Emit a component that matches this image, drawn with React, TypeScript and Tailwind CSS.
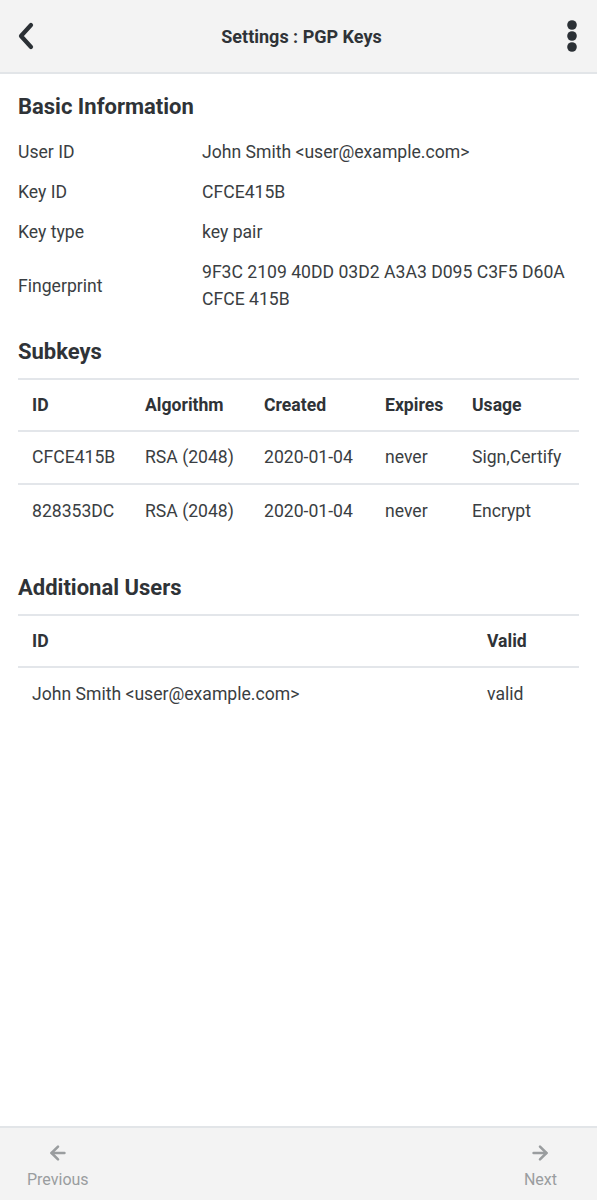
import { ArrowLeft, ArrowRight } from "lucide-react";

const basicInfo = [
  { label: "User ID", value: "John Smith <user@example.com>" },
  { label: "Key ID", value: "CFCE415B" },
  { label: "Key type", value: "key pair" },
  {
    label: "Fingerprint",
    value: "9F3C 2109 40DD 03D2 A3A3 D095 C3F5 D60A CFCE 415B",
  },
];

const subkeys = [
  { id: "CFCE415B", algo: "RSA (2048)", created: "2020-01-04", expires: "never", usage: "Sign,Certify" },
  { id: "828353DC", algo: "RSA (2048)", created: "2020-01-04", expires: "never", usage: "Encrypt" },
];

function BackIcon() {
  return (
    <svg width="20" height="30" viewBox="0 0 20 30" fill="none">
      <polyline
        points="15,4 5,15 15,26"
        stroke="#2b3035"
        strokeWidth="4.2"
        strokeLinecap="round"
        strokeLinejoin="round"
      />
    </svg>
  );
}

function MoreIcon() {
  return (
    <svg width="10" height="32" viewBox="0 0 10 32" fill="#2b3035">
      <circle cx="5" cy="5" r="4.8" />
      <circle cx="5" cy="16" r="4.8" />
      <circle cx="5" cy="27" r="4.8" />
    </svg>
  );
}

export default function App() {
  return (
    <div
      className="h-screen flex flex-col bg-white text-[#3a3e42]"
      style={{ fontFamily: "Roboto, 'Liberation Sans', sans-serif" }}
    >
      <header className="h-[74px] shrink-0 bg-[#f3f3f3] border-b-2 border-[#e2e5e8] flex items-center justify-between pl-[16px] pr-[20px]">
        <button className="flex items-center justify-center">
          <BackIcon />
        </button>
        <h1 className="text-[18px] font-bold text-[#2f3337]">Settings : PGP Keys</h1>
        <button className="flex items-center justify-center">
          <MoreIcon />
        </button>
      </header>

      <main className="flex-1 px-[18px] pt-[19px] text-[17.6px]">
        <h2 className="text-[22px] leading-[28px] font-bold text-[#2f3337]">Basic Information</h2>
        <div className="mt-[11px]">
          {basicInfo.map((row) => (
            <div key={row.label} className="flex items-center py-[8px] leading-[24px]">
              <div className="w-[184px] shrink-0">{row.label}</div>
              <div className="flex-1 leading-[27px] -my-[1.5px]">{row.value}</div>
            </div>
          ))}
        </div>

        <h2 className="mt-[19px] text-[22px] leading-[28px] font-bold text-[#2f3337]">Subkeys</h2>
        <table className="mt-[12px] w-full border-collapse text-left">
          <thead>
            <tr className="border-t-2 border-b-2 border-[#e3e6ea] h-[52px]">
              <th className="pl-[14px] w-[127px] font-bold text-[#2f3337]">ID</th>
              <th className="w-[119px] font-bold text-[#2f3337]">Algorithm</th>
              <th className="w-[121px] font-bold text-[#2f3337]">Created</th>
              <th className="w-[87px] font-bold text-[#2f3337]">Expires</th>
              <th className="font-bold text-[#2f3337]">Usage</th>
            </tr>
          </thead>
          <tbody>
            {subkeys.map((k, i) => (
              <tr
                key={k.id}
                className={`h-[53px] ${i < subkeys.length - 1 ? "border-b-2 border-[#e3e6ea]" : ""}`}
              >
                <td className="pl-[14px]">{k.id}</td>
                <td>{k.algo}</td>
                <td>{k.created}</td>
                <td>{k.expires}</td>
                <td className="whitespace-nowrap">{k.usage}</td>
              </tr>
            ))}
          </tbody>
        </table>

        <h2 className="mt-[37px] text-[22px] leading-[28px] font-bold text-[#2f3337]">Additional Users</h2>
        <table className="mt-[12px] w-full border-collapse text-left">
          <thead>
            <tr className="border-t-2 border-b-2 border-[#e3e6ea] h-[52px]">
              <th className="pl-[14px] font-bold text-[#2f3337]">ID</th>
              <th className="w-[92px] font-bold text-[#2f3337]">Valid</th>
            </tr>
          </thead>
          <tbody>
            <tr className="h-[53px]">
              <td className="pl-[14px]">John Smith &lt;user@example.com&gt;</td>
              <td>valid</td>
            </tr>
          </tbody>
        </table>
      </main>

      <footer className="h-[74px] shrink-0 bg-[#f3f3f3] border-t-2 border-[#e2e5e8] flex items-center justify-between pl-[27px] pr-[40px] text-[#9a9d9f]">
        <button className="flex flex-col items-center gap-[7px] pt-[2px]">
          <ArrowLeft size={22} strokeWidth={2.8} />
          <span className="text-[16px] leading-[18px]">Previous</span>
        </button>
        <button className="flex flex-col items-center gap-[7px] pt-[2px]">
          <ArrowRight size={22} strokeWidth={2.8} />
          <span className="text-[16px] leading-[18px]">Next</span>
        </button>
      </footer>
    </div>
  );
}
